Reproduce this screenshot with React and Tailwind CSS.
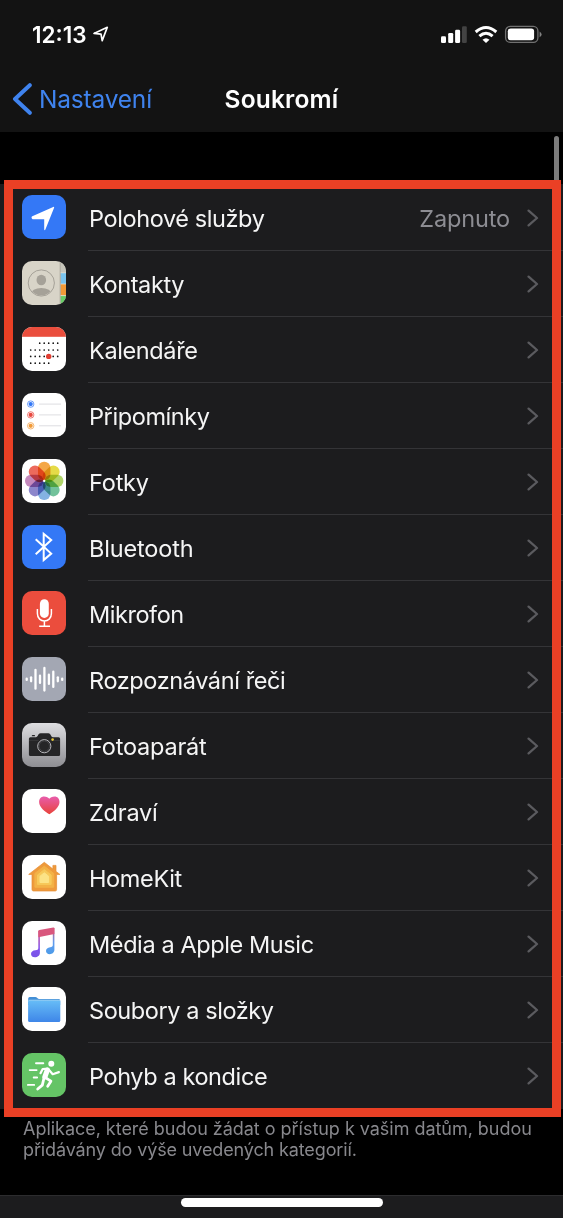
import React from "react";

function Tile({ className, children }) {
  return (
    <svg viewBox="0 0 44 44" className={`mb-0.5 size-11 shrink-0 rounded-[10px] ${className}`}>
      {children}
    </svg>
  );
}

const LocationIcon = () => (
  <Tile className="bg-[#3478f6]">
    <path d="M10.3 21.2 31.2 12Q32.6 11.5 32 12.9L23.4 34.5Q22.6 36 22.2 34.4V24.3H10.6Q8.6 22.3 10.3 21.2Z" fill="#fff" />
  </Tile>
);

const ContactsIcon = () => (
  <Tile className="bg-[#d8d4c8]">
    <defs>
      <clipPath id="person"><circle cx="19.3" cy="22" r="12.4" /></clipPath>
    </defs>
    <rect x="38.6" width="6" height="12" fill="#c6c5bb" />
    <rect x="38.6" y="12" width="6" height="11" fill="#79c3ee" />
    <rect x="38.6" y="23" width="6" height="11.4" fill="#f19a38" />
    <rect x="38.6" y="34.8" width="6" height="10" fill="#68ce67" />
    <path d="M38.2 0V44" stroke="#a5a399" strokeWidth=".9" />
    <path d="M38.6 11.8H44M38.6 23H44M38.6 34.6H44" stroke="#e8e5da" strokeWidth=".7" />
    <circle cx="19.3" cy="22" r="13.1" fill="none" stroke="#a5a198" strokeWidth="1" />
    <g clipPath="url(#person)" fill="#a5a198">
      <ellipse cx="19.3" cy="19" rx="4.8" ry="5.3" />
      <ellipse cx="19.3" cy="33" rx="10.5" ry="5.9" />
    </g>
  </Tile>
);

const dotColumns = [8.7, 13.2, 17.7, 22.2, 26.7, 31.2, 35.7];
const dotRows = [
  { y: 16.2, from: 2, to: 6 },
  { y: 23, from: 0, to: 6 },
  { y: 29.4, from: 0, to: 6 },
  { y: 36.2, from: 0, to: 4 },
];

const CalendarIcon = () => (
  <Tile className="bg-white">
    <rect width="44" height="9.8" fill="#ea4e3d" />
    {dotRows.map((r) =>
      dotColumns.slice(r.from, r.to + 1).map((x) => (
        <circle key={`${r.y}-${x}`} cx={x} cy={r.y} r=".85" fill="#111" />
      ))
    )}
    <circle cx="26.7" cy="29.4" r="2.7" fill="#e03e32" />
  </Tile>
);

const RemindersIcon = () => (
  <Tile className="bg-white">
    {[["#3478f6", 11.1], ["#e8483f", 21.9], ["#f19a38", 32.8]].map(([c, y]) => (
      <g key={c}>
        <circle cx="8.7" cy={y} r="3.2" fill="none" stroke={c} strokeWidth=".7" />
        <circle cx="8.7" cy={y} r="2.1" fill={c} />
        <path d={`M17 ${y}H39`} stroke="#d0d0d4" strokeWidth=".7" />
      </g>
    ))}
  </Tile>
);

const petals = ["#f29b2e", "#e3d62e", "#a5ce55", "#5fb98d", "#73a7de", "#7c75c4", "#bd79b4", "#ea5545"];

const PhotosIcon = () => (
  <Tile className="bg-white">
    {petals.map((c, i) => (
      <rect key={c} x="16" y="2.7" width="12.4" height="18.6" rx="6" fill={c} fillOpacity=".88" className="mix-blend-multiply" transform={`rotate(${i * 45} 22.2 21.9)`} />
    ))}
    <circle cx="22.2" cy="21.9" r="1.1" fill="#fff" />
  </Tile>
);

const BluetoothIcon = () => (
  <Tile className="bg-[#3478f6]">
    <path d="M13.7 14.3 29.2 28.6 21.7 35V8.8L29.2 15.1 13.7 29.2" fill="none" stroke="#fff" strokeWidth="2" />
  </Tile>
);

const MicIcon = () => (
  <Tile className="bg-[#eb4d3d]">
    <rect x="17.9" y="8.3" width="8.9" height="18.6" rx="4.4" fill="#fff" />
    <path d="M15.4 18V22.5C15.4 32.5 29.4 32.5 29.4 22.5V18M22.4 30V35M17.2 35.2H28" fill="none" stroke="#fff" strokeWidth="1.5" />
  </Tile>
);

const waveBars = [[4.7, 0.6], [9.1, 2], [13.5, 9.4], [18, 3.6], [22.4, 11.3], [26.9, 4.6], [31.3, 7.6], [35.8, 2], [40.2, 0.6]];

const SpeechIcon = () => (
  <Tile className="bg-[#a3a7b3]">
    {waveBars.map(([x, h]) => (
      <path key={x} d={`M${x} ${22.3 - h}V${22.3 + h}`} stroke="#fff" strokeWidth="2.3" strokeLinecap="round" />
    ))}
  </Tile>
);

const CameraIcon = () => (
  <Tile className="bg-linear-to-b from-[#dedee1] to-[#8e8e93]">
    <path d="M8.4 14.3H14C15.3 14.3 16 12 17 10.8Q17.6 10.2 18.6 10.2H26.4Q27.4 10.2 28 11C29 12.4 29.6 14.3 31 14.3H36.6Q38.1 14.3 38.1 15.8V31.5Q38.1 33 36.6 33H8.4Q6.9 33 6.9 31.5V15.8Q6.9 14.3 8.4 14.3Z" fill="#252527" />
    <path d="M9.7 13.2Q9.9 12.1 10.7 12.1H12.3Q13 12.1 13.2 13.2Z" fill="#252527" />
    <path d="M7 17.4H17M28.4 17.4H38" stroke="#48484b" strokeWidth=".5" />
    <circle cx="22.3" cy="23.2" r="8" fill="#252527" />
    <circle cx="22.3" cy="23.2" r="6.6" fill="none" stroke="#b8b8bc" strokeWidth="1" />
    <circle cx="22.3" cy="23.2" r="5.2" fill="none" stroke="#68686c" strokeWidth=".4" />
    <circle cx="30.6" cy="16.6" r="1.3" fill="#e5c837" />
  </Tile>
);

const HealthIcon = () => (
  <Tile className="bg-white">
    <defs>
      <linearGradient id="heart" x1="0" y1="0" x2="0" y2="1">
        <stop offset="0" stopColor="#e85cab" />
        <stop offset="1" stopColor="#e8433a" />
      </linearGradient>
    </defs>
    <path d="M27.3 25.2C23.2 22.9 17.1 18.4 17.1 13.1C17.1 9.7 19.2 7.6 22 7.6C24.6 7.6 26.5 8.9 27.3 9.7C28.1 8.9 30 7.6 32.6 7.6C35.4 7.6 37.5 9.7 37.5 13.1C37.5 18.4 31.4 22.9 27.3 25.2Z" fill="url(#heart)" />
  </Tile>
);

const HomeKitIcon = () => (
  <Tile className="bg-white">
    <path d="M22.3 7.3 30.9 14V10.4H34V16.4L37.9 19.4H34.6V34.6Q34.6 36 33.2 36H11.4Q10 36 10 34.6V19.4H6.7Z" fill="#ee9a3c" stroke="#e58e35" strokeWidth=".7" strokeLinejoin="round" />
    <path d="M22.3 11.2 31.7 18.4V32.2H12.9V18.4Z" fill="#f3b247" stroke="#f3b247" strokeLinejoin="round" />
    <path d="M22.3 14.6 29.1 20V29.4H15.5V20Z" fill="#f7c95a" stroke="#f7c95a" strokeLinejoin="round" />
    <path d="M22.3 17.8 26.6 21.2V27.5H18V21.2Z" fill="#fce386" stroke="#fce386" strokeLinejoin="round" />
  </Tile>
);

const MusicIcon = () => (
  <Tile className="bg-white">
    <defs>
      <linearGradient id="stemLeft" x1="0" y1="0" x2="0" y2="1">
        <stop offset="0" stopColor="#d8588a" />
        <stop offset=".65" stopColor="#8355ef" />
        <stop offset="1" stopColor="#7753e6" />
      </linearGradient>
      <linearGradient id="stemRight" x1="0" y1="0" x2="0" y2="1">
        <stop offset="0" stopColor="#d85877" />
        <stop offset=".55" stopColor="#609cef" />
        <stop offset="1" stopColor="#4b9be8" />
      </linearGradient>
    </defs>
    <path d="M16.3 9.7H17.9V32C17.9 34.4 15.6 36.3 12.9 36.3C10.6 36.3 9 35 9 33C9 30.8 10.8 29.4 13.3 29.2C15.4 29.1 16.3 28.6 16.3 27Z" fill="url(#stemLeft)" />
    <path d="M30.8 7H32.4V28.8C32.4 31.3 30.2 33.2 27.8 33.2C25.5 33.2 24 31.9 24 30C24 27.9 25.6 26.5 28.1 26.2C30 26 30.8 25.5 30.8 24Z" fill="url(#stemRight)" />
    <path d="M16.3 10.4Q16.3 9.3 17.4 9.1L31.3 6.6Q32.4 6.5 32.4 7.6V13L16.3 16.3Z" fill="#d9577d" />
  </Tile>
);

const FilesIcon = () => (
  <Tile className="bg-white">
    <defs>
      <linearGradient id="folder" x1="0" y1="0" x2="0" y2="1">
        <stop offset="0" stopColor="#67bdf7" />
        <stop offset="1" stopColor="#3e86e8" />
      </linearGradient>
    </defs>
    <path d="M6.2 14V11.5Q6.2 10 7.7 10H13.3C15 10 15.6 12 17.3 12H36.7Q38.2 12 38.2 13.5V18H6.2Z" fill="#438fd6" />
    <path d="M7.4 13.3H37.1Q38.3 13.3 38.3 14.6V33.5Q38.3 35 36.8 35H7.6Q6.1 35 6.1 33.5V14.6Q6.1 13.3 7.4 13.3Z" fill="url(#folder)" />
    <path d="M6.4 14Q7 13.2 8 13.2H36.4Q37.6 13.2 38 14" fill="none" stroke="#b7e1fb" strokeWidth=".7" />
  </Tile>
);

const FitnessIcon = () => (
  <Tile className="bg-[#65c466]">
    <circle cx="29.3" cy="10.8" r="3" fill="#fff" />
    <g fill="none" stroke="#fff" strokeLinecap="round" strokeLinejoin="round">
      <path d="M18.5 20.2 20.7 16 26 15.6 30.7 21.2 36.9 19.1" strokeWidth="2.2" />
      <path d="M25.3 17.2 22.9 23.8" strokeWidth="5.2" />
      <path d="M23.8 24.8 28.9 28.2 25.7 33.3" strokeWidth="2.8" />
      <path d="M22 25 20.3 32.1 15.7 36" strokeWidth="2.8" />
      <path d="M14 10.2H21.3M7.7 17.1H14.6M11.7 24.5H15.1M5.9 31.9H12.2" strokeWidth="1.9" />
    </g>
  </Tile>
);

const rows = [
  { label: "Polohové služby", Icon: LocationIcon, value: "Zapnuto", tracking: "tracking-[-0.4px]" },
  { label: "Kontakty", Icon: ContactsIcon, tracking: "tracking-[-0.38px]" },
  { label: "Kalendáře", Icon: CalendarIcon, tracking: "tracking-[-0.38px]" },
  { label: "Připomínky", Icon: RemindersIcon, tracking: "tracking-[-0.4px]" },
  { label: "Fotky", Icon: PhotosIcon, tracking: "tracking-[-0.2px]" },
  { label: "Bluetooth", Icon: BluetoothIcon, tracking: "tracking-[-0.15px]" },
  { label: "Mikrofon", Icon: MicIcon, tracking: "tracking-[-0.45px]" },
  { label: "Rozpoznávání řeči", Icon: SpeechIcon, tracking: "tracking-[-0.4px]" },
  { label: "Fotoaparát", Icon: CameraIcon, tracking: "tracking-[-0.2px]" },
  { label: "Zdraví", Icon: HealthIcon, tracking: "tracking-[-0.2px]" },
  { label: "HomeKit", Icon: HomeKitIcon, tracking: "tracking-[-0.35px]" },
  { label: "Média a Apple Music", Icon: MusicIcon, tracking: "tracking-[-0.4px]" },
  { label: "Soubory a složky", Icon: FilesIcon, tracking: "tracking-[-0.42px]" },
  { label: "Pohyb a kondice", Icon: FitnessIcon, tracking: "tracking-[-0.4px]" },
];

function Row({ label, Icon, value, tracking, last }) {
  return (
    <li className="flex h-[66px] items-center pl-[22px]">
      <Icon />
      <div className={`ml-[22px] flex h-full flex-1 items-center justify-between border-b pl-px pr-6 pt-[3px] ${last ? "border-transparent" : "border-[#343437]"}`}>
        <span className={`whitespace-nowrap text-[23.5px] leading-8 text-[#f5f5f5] ${tracking}`}>{label}</span>
        <span className="flex items-center gap-[17px]">
          {value && <span className="text-[23.5px] leading-8 tracking-[-0.15px] text-[#8d8d93]">{value}</span>}
          <svg viewBox="0 0 12 18" className="mb-[3px] h-[18px] w-3">
            <path d="M1.6 1.6 10 9 1.6 16.4" fill="none" stroke="#5b5b5f" strokeWidth="2.3" strokeLinecap="round" strokeLinejoin="round" />
          </svg>
        </span>
      </div>
    </li>
  );
}

function StatusBar() {
  return (
    <div className="flex h-[68px] items-center justify-between pl-8 pr-5">
      <div className="flex items-center gap-1.5 text-white">
        <span className="pt-0.5 text-[22.5px] font-semibold leading-7">12:13</span>
        <svg viewBox="0 0 16 16" className="size-4">
          <path d="M1 7.4 14.3 1.3 9.2 14.6 8 8.2Z" fill="none" stroke="currentColor" strokeWidth="1.7" strokeLinejoin="round" />
        </svg>
      </div>
      <svg viewBox="0 0 102 20" className="h-5 w-[102px]">
        <g fill="#fff">
          <rect x="0" y="12.3" width="5" height="6.8" rx="1.3" />
          <rect x="7.2" y="9" width="5" height="10.1" rx="1.3" />
          <rect x="14.1" y="5.7" width="5" height="13.4" rx="1.3" />
          <rect x="21" y="2.3" width="4.8" height="16.8" rx="1.3" fill="#434343" />
          <path d="M45 19.1 41.5 15.8Q45 12.8 48.5 15.8Z" />
        </g>
        <g fill="none" stroke="#fff" strokeWidth="3">
          <path d="M34.7 8Q45 -1 55.3 8" />
          <path d="M38.4 12.2Q45 6.3 51.6 12.2" />
        </g>
        <rect x="64.6" y="2.4" width="32.3" height="16" rx="4.6" fill="none" stroke="#717171" strokeWidth="1.3" />
        <rect x="66.8" y="4.5" width="26.3" height="11.8" rx="2.8" fill="#fff" />
        <path d="M98.6 7.5Q102.6 10.4 98.6 13.3Z" fill="#818181" />
      </svg>
    </div>
  );
}

export default function App() {
  return (
    <main className="relative flex h-[1218px] w-[563px] flex-col overflow-hidden bg-black font-['Inter','Liberation_Sans',sans-serif]">
      <header className="h-[132px] bg-[#131313]">
        <StatusBar />
        <nav className="grid h-[62px] grid-cols-[1fr_auto_1fr] items-center text-[24.5px] leading-8">
          <div className="flex items-center gap-[7px] pl-3 text-[#3f83ee]">
            <svg viewBox="0 0 20 32" className="h-8 w-5">
              <path d="M17.8 2.2 3 16 17.8 29.8" fill="none" stroke="currentColor" strokeWidth="4" strokeLinecap="round" strokeLinejoin="round" />
            </svg>
            <span className="tracking-[-0.2px]">Nastavení</span>
          </div>
          <h1 className="font-semibold tracking-[0.2px] text-white">Soukromí</h1>
        </nav>
      </header>

      <ul className="mt-13 bg-[#1c1c1e] pt-px">
        {rows.map((row, i) => (
          <Row key={row.label} {...row} last={i === rows.length - 1} />
        ))}
      </ul>

      <p className="whitespace-nowrap pl-[23px] pt-[9px] text-[18px] leading-[21px] text-[#88888d]">
        <span className="tracking-[-0.03px]">Aplikace, které budou žádat o přístup k vašim datům, budou</span>
        <br />
        <span className="tracking-[-0.13px]">přidávány do výše uvedených kategorií.</span>
      </p>

      <footer className="mt-auto flex h-[23px] justify-center border-t border-[#2c2c2e] bg-[#1c1c1e] pt-0.5">
        <div className="h-[9px] w-[202px] rounded-full bg-white" />
      </footer>

      <div className="absolute left-[554px] top-[136px] h-[60px] w-[5px] rounded-full bg-[#7c7c7c]" />
      <div className="absolute left-1 top-[180px] h-[937px] w-[557px] border-[9px] border-[#ea4025]" />
    </main>
  );
}
